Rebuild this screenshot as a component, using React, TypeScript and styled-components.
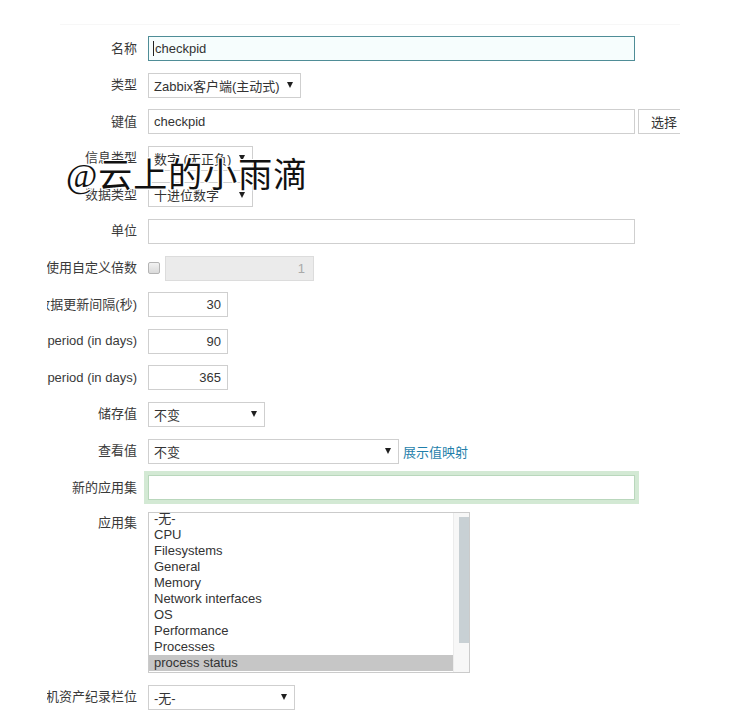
import React from "react";
import styled, { createGlobalStyle } from "styled-components";

const Global = createGlobalStyle`
  html, body { margin: 0; padding: 0; background: #ffffff; }
  body {
    width: 739px;
    height: 712px;
    overflow: hidden;
    font-family: "Liberation Sans", "Noto Sans CJK SC", sans-serif;
    font-size: 13px;
    color: #333;
  }
`;

const Page = styled.div`
  position: relative;
  width: 739px;
  height: 712px;
  padding-top: 24px;
  box-sizing: border-box;
`;

const Clip = styled.div`
  margin-left: 47px;
  width: 633px;
  overflow: hidden;
`;

const TopRule = styled.div`
  margin-left: 13px;
  border-top: 1px solid #f7f7f7;
  height: 11px;
`;

const Form = styled.div`
  display: flex;
  flex-direction: column;
  gap: 11.6px;
`;

const Row = styled.div<{ $top?: boolean; $mt?: number }>`
  display: flex;
  align-items: ${(p) => (p.$top ? "flex-start" : "center")};
  min-height: 25px;
  margin-top: ${(p) => p.$mt ?? 0}px;
`;

const Label = styled.div<{ $pt?: number }>`
  flex: 0 0 90px;
  width: 90px;
  margin-right: 11px;
  display: flex;
  justify-content: flex-end;
  overflow: hidden;
  white-space: nowrap;
  color: #3a3a3a;
  font-size: 13px;
  line-height: 16px;
  padding-top: ${(p) => p.$pt ?? 0}px;
`;

const Field = styled.div`
  display: flex;
  align-items: center;
  gap: 4px;
`;

const TextBox = styled.div<{ $w: number; $focus?: boolean; $right?: boolean; $glow?: boolean; $disabled?: boolean }>`
  box-sizing: border-box;
  width: ${(p) => p.$w}px;
  height: 25px;
  display: flex;
  align-items: center;
  justify-content: ${(p) => (p.$right ? "flex-end" : "flex-start")};
  padding: 0 ${(p) => (p.$right ? (p.$disabled ? 8 : 6) : 5)}px;
  border: 1px solid
    ${(p) => (p.$focus ? "#4f8d97" : p.$glow ? "#b9d7bc" : p.$disabled ? "#dcdcdc" : "#cfcfcf")};
  background: ${(p) => (p.$focus ? "#f6fdfd" : p.$disabled ? "#ebebeb" : "#ffffff")};
  color: ${(p) => (p.$disabled ? "#a9a9a9" : "#333")};
  font-size: 13px;
  white-space: nowrap;
  box-shadow: ${(p) => (p.$glow ? "0 0 0 4px #d3e9d4" : "none")};
`;

const Caret = styled.span`
  display: inline-block;
  width: 1px;
  height: 15px;
  background: #222;
  margin-right: 1px;
  margin-left: -1px;
`;

const Select = styled.div<{ $w: number }>`
  box-sizing: border-box;
  width: ${(p) => p.$w}px;
  height: 25px;
  display: flex;
  align-items: center;
  justify-content: space-between;
  padding: 0 7px 0 5px;
  border: 1px solid #cfcfcf;
  background: #ffffff;
  color: #333;
  font-size: 13px;
  white-space: nowrap;
`;

const Arrow = styled.span`
  width: 0;
  height: 0;
  border-left: 3px solid transparent;
  border-right: 3px solid transparent;
  border-top: 6px solid #1f1f1f;
  flex: 0 0 auto;
`;

const Button = styled.div`
  box-sizing: border-box;
  width: 52px;
  height: 25px;
  margin-left: -1px;
  display: flex;
  align-items: center;
  padding-left: 12px;
  border: 1px solid #cfcfcf;
  background: #ffffff;
  color: #333;
  font-size: 13px;
  white-space: nowrap;
`;

const Check = styled.div`
  box-sizing: border-box;
  width: 12px;
  height: 12px;
  border: 1px solid #b4b4b4;
  border-radius: 2px;
  background: linear-gradient(#f2f2f2, #dadada);
  margin-right: 1px;
`;

const Link = styled.span`
  color: #1f7fab;
  font-size: 13px;
  white-space: nowrap;
`;

const ListBox = styled.div`
  box-sizing: border-box;
  width: 322px;
  height: 161px;
  border: 1px solid #cbcbcb;
  display: flex;
  overflow: hidden;
  background: #fff;
`;

const Items = styled.div`
  flex: 1;
  margin-top: -2px;
`;

const Item = styled.div<{ $sel?: boolean }>`
  height: 16px;
  line-height: 16px;
  padding-left: 5px;
  font-size: 13px;
  color: #333;
  white-space: nowrap;
  background: ${(p) => (p.$sel ? "#c6c6c6" : "transparent")};
`;

const Scrollbar = styled.div`
  flex: 0 0 16px;
  box-sizing: border-box;
  padding: 4px 0 0 5px;
  background: #f7f7f7;
  border-left: 1px solid #ececec;
`;

const Thumb = styled.div`
  width: 10px;
  height: 126px;
  background: #c8d0d4;
`;

const Watermark = styled.div`
  position: absolute;
  left: 66px;
  top: 159px;
  font-family: "Liberation Serif", "Noto Sans CJK SC", serif;
  font-weight: 400;
  font-size: 34px;
  letter-spacing: 1px;
  line-height: 1;
  color: #111;
  white-space: nowrap;
  text-shadow: 1px 0 0 #fff, -1px 0 0 #fff, 0 1px 0 #fff, 0 -1px 0 #fff,
    1px 1px 0 #fff, -1px -1px 0 #fff, 1px -1px 0 #fff, -1px 1px 0 #fff;
`;

const apps = [
  "-无-",
  "CPU",
  "Filesystems",
  "General",
  "Memory",
  "Network interfaces",
  "OS",
  "Performance",
  "Processes",
  "process status",
];

export default function App() {
  return (
    <>
      <Global />
      <Page>
        <Clip>
          <TopRule />
          <Form>
            <Row>
              <Label>名称</Label>
              <Field>
                <TextBox $w={487} $focus>
                  <Caret />
                  checkpid
                </TextBox>
              </Field>
            </Row>
            <Row>
              <Label>类型</Label>
              <Field>
                <Select $w={153}>
                  Zabbix客户端(主动式)
                  <Arrow />
                </Select>
              </Field>
            </Row>
            <Row>
              <Label>键值</Label>
              <Field>
                <TextBox $w={487}>checkpid</TextBox>
                <Button>选择</Button>
              </Field>
            </Row>
            <Row>
              <Label>信息类型</Label>
              <Field>
                <Select $w={105}>
                  数字 (无正负)
                  <Arrow />
                </Select>
              </Field>
            </Row>
            <Row>
              <Label>数据类型</Label>
              <Field>
                <Select $w={105}>
                  十进位数字
                  <Arrow />
                </Select>
              </Field>
            </Row>
            <Row>
              <Label>单位</Label>
              <Field>
                <TextBox $w={487} />
              </Field>
            </Row>
            <Row>
              <Label>使用自定义倍数</Label>
              <Field>
                <Check />
                <TextBox $w={149} $right $disabled>
                  1
                </TextBox>
              </Field>
            </Row>
            <Row>
              <Label>数据更新间隔(秒)</Label>
              <Field>
                <TextBox $w={80} $right>
                  30
                </TextBox>
              </Field>
            </Row>
            <Row>
              <Label>History storage period (in days)</Label>
              <Field>
                <TextBox $w={80} $right>
                  90
                </TextBox>
              </Field>
            </Row>
            <Row>
              <Label>Trend storage period (in days)</Label>
              <Field>
                <TextBox $w={80} $right>
                  365
                </TextBox>
              </Field>
            </Row>
            <Row>
              <Label>储存值</Label>
              <Field>
                <Select $w={117}>
                  不变
                  <Arrow />
                </Select>
              </Field>
            </Row>
            <Row>
              <Label>查看值</Label>
              <Field>
                <Select $w={251}>
                  不变
                  <Arrow />
                </Select>
                <Link>展示值映射</Link>
              </Field>
            </Row>
            <Row>
              <Label>新的应用集</Label>
              <Field>
                <TextBox $w={487} $glow />
              </Field>
            </Row>
            <Row $top>
              <Label $pt={3}>应用集</Label>
              <Field>
                <ListBox>
                  <Items>
                    {apps.map((a, i) => (
                      <Item key={a} $sel={i === apps.length - 1}>
                        {a}
                      </Item>
                    ))}
                  </Items>
                  <Scrollbar>
                    <Thumb />
                  </Scrollbar>
                </ListBox>
              </Field>
            </Row>
            <Row $mt={0.6}>
              <Label>主机资产纪录栏位</Label>
              <Field>
                <Select $w={147}>
                  -无-
                  <Arrow />
                </Select>
              </Field>
            </Row>
          </Form>
        </Clip>
        <Watermark>@云上的小雨滴</Watermark>
      </Page>
    </>
  );
}
